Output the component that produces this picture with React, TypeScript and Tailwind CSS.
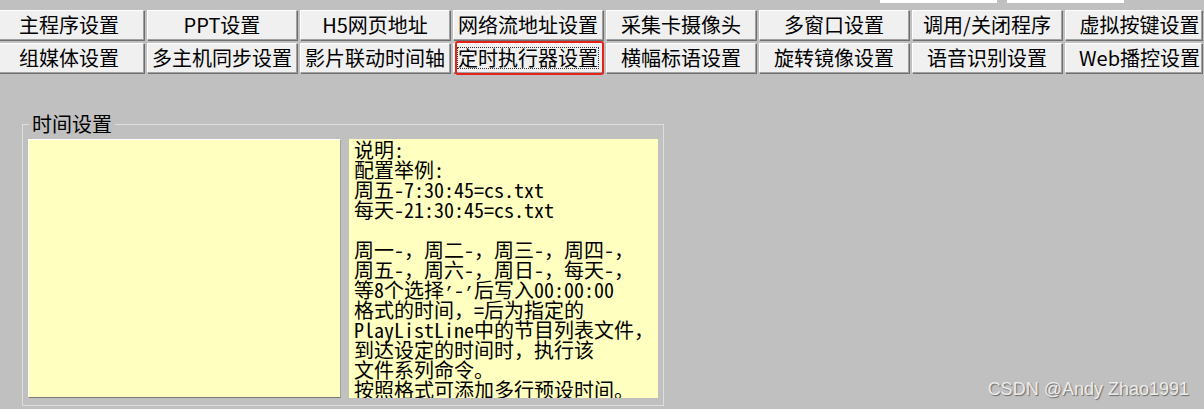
import React from 'react';

const row1 = ['主程序设置', 'PPT设置', 'H5网页地址', '网络流地址设置', '采集卡摄像头', '多窗口设置', '调用/关闭程序', '虚拟按键设置'];
const row2 = ['组媒体设置', '多主机同步设置', '影片联动时间轴', '定时执行器设置', '横幅标语设置', '旋转镜像设置', '语音识别设置', 'Web播控设置'];

const Q = () => <span className="font-['Liberation_Mono',monospace] text-[16.6px]">’</span>;

const notes: React.ReactNode[] = [
  '说明:',
  '配置举例:',
  '周五-7:30:45=cs.txt',
  '每天-21:30:45=cs.txt',
  '',
  '周一-，周二-，周三-，周四-，',
  '周五-，周六-，周日-，每天-，',
  <>
    等8个选择<Q />-<Q />后写入00:00:00
  </>,
  '格式的时间，=后为指定的',
  'PlayListLine中的节目列表文件，',
  '到达设定的时间时，执行该',
  '文件系列命令。',
  '按照格式可添加多行预设时间。',
];

function WinButton({ label, last, focused }: { label: string; last?: boolean; focused?: boolean }) {
  return (
    <button
      className={`relative h-[30px] shrink-0 flex items-center justify-center bg-[#f0f0f0] border border-t-white border-l-white border-r-[#a0a0a0] border-b-[#a0a0a0] shadow-[1px_1px_0_#6e6e6e] text-[20px] leading-[20px] text-black ${
        last ? 'w-[137px] pl-[12px]' : 'w-[150px]'
      }`}
    >
      {label}
      {focused && (
        <>
          <span className="absolute inset-[3px] border border-dotted border-[#333]" />
          <span className="absolute -top-[3px] -bottom-[3px] left-[1px] -right-[2px] border-2 border-[#e5231b] rounded-[3px]" />
        </>
      )}
    </button>
  );
}

export default function App() {
  return (
    <div className="relative w-[1204px] h-[409px] overflow-hidden bg-[#c0c0c0] font-['Noto_Sans_CJK_SC',sans-serif]">
      {/* edges of inputs above */}
      <div className="flex h-[3px]">
        <div className="ml-[880px] w-[117px] bg-white" />
        <div className="ml-[10px] w-[117px] bg-white" />
      </div>

      {/* Tabs */}
      <div className="mt-[7px] -ml-[6px] flex flex-col gap-[3px]">
        <div className="flex gap-[3px]">
          {row1.map((t, i) => (
            <WinButton key={t} label={t} last={i === row1.length - 1} />
          ))}
        </div>
        <div className="flex gap-[3px]">
          {row2.map((t, i) => (
            <WinButton key={t} label={t} last={i === row2.length - 1} focused={t === '定时执行器设置'} />
          ))}
        </div>
      </div>

      {/* Time settings group */}
      <fieldset className="ml-[22px] mt-[41px] w-[642px] border border-[#dedede] pl-[5px] pr-[5px] pb-[7px]">
        <legend className="ml-[1px] px-[3px] text-[20px] leading-[20px] text-black">时间设置</legend>
        <div className="flex gap-[8px] pt-[5px]">
          <textarea
            readOnly
            className="w-[313px] h-[259px] resize-none bg-[#ffffc0] border border-t-white border-l-white border-r-[#a0a0a0] border-b-[#7a7a7a] outline-none"
          />
          <div className="w-[309px] h-[259px] overflow-hidden bg-[#ffffc0] pl-[5px] pt-[1px] text-[20px] leading-[20px] text-black font-['Noto_Sans_Mono_CJK_SC','Noto_Sans_CJK_SC',monospace] whitespace-pre">
            {notes.map((l, i) => (
              <div key={i} className="h-[20px]">
                {l}
              </div>
            ))}
          </div>
        </div>
      </fieldset>

      {/* watermark */}
      <div className="absolute right-[15px] top-[380px] text-[18px] leading-[18px] text-[#ececec] font-['Liberation_Sans',sans-serif] [text-shadow:1px_1px_1px_rgba(0,0,0,0.45)]">
        CSDN @Andy Zhao1991
      </div>
    </div>
  );
}
